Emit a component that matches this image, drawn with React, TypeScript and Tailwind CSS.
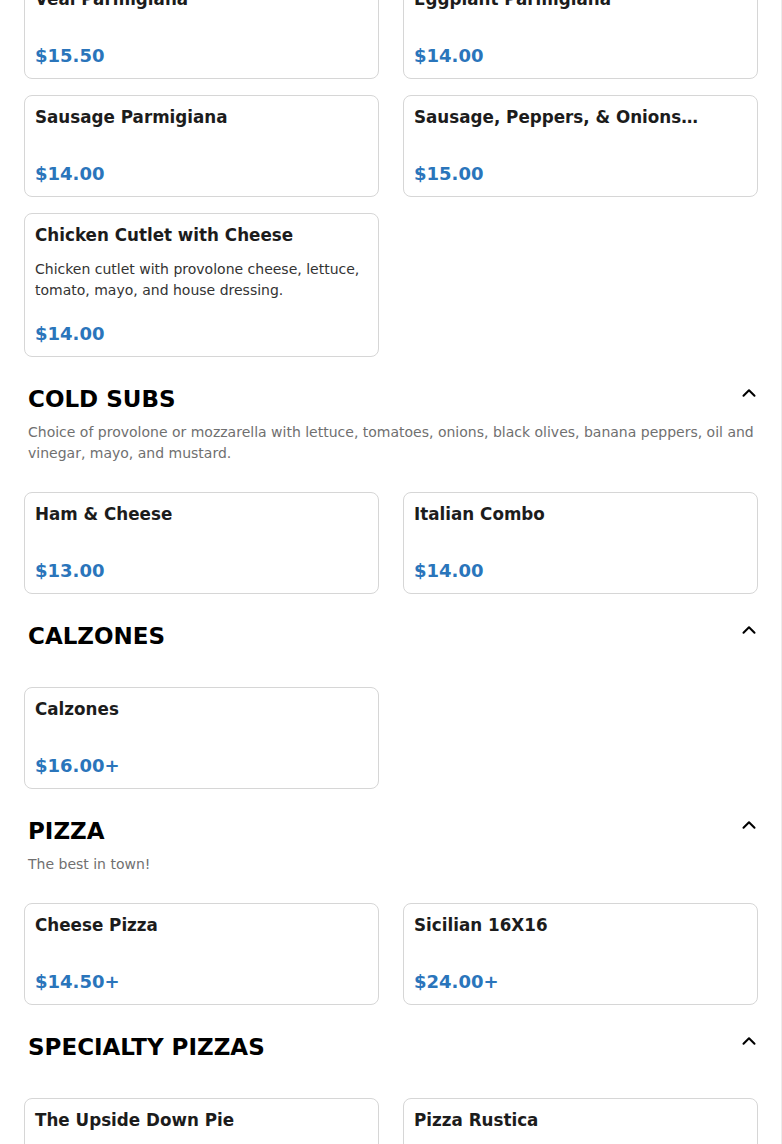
import { ChevronUp } from "lucide-react";

type Item = { name: string; price: string; description?: string };
type Section = { title?: string; subtitle?: string; items: Item[] };

const sections: Section[] = [
  {
    items: [
      { name: "Veal Parmigiana", price: "$15.50" },
      { name: "Eggplant Parmigiana", price: "$14.00" },
      { name: "Sausage Parmigiana", price: "$14.00" },
      { name: "Sausage, Peppers, & Onions…", price: "$15.00" },
      {
        name: "Chicken Cutlet with Cheese",
        price: "$14.00",
        description:
          "Chicken cutlet with provolone cheese, lettuce, tomato, mayo, and house dressing.",
      },
    ],
  },
  {
    title: "COLD SUBS",
    subtitle:
      "Choice of provolone or mozzarella with lettuce, tomatoes, onions, black olives, banana peppers, oil and vinegar, mayo, and mustard.",
    items: [
      { name: "Ham & Cheese", price: "$13.00" },
      { name: "Italian Combo", price: "$14.00" },
    ],
  },
  {
    title: "CALZONES",
    items: [{ name: "Calzones", price: "$16.00+" }],
  },
  {
    title: "PIZZA",
    subtitle: "The best in town!",
    items: [
      { name: "Cheese Pizza", price: "$14.50+" },
      { name: "Sicilian 16X16", price: "$24.00+" },
    ],
  },
  {
    title: "SPECIALTY PIZZAS",
    items: [
      { name: "The Upside Down Pie", price: "$18.00+" },
      { name: "Pizza Rustica", price: "$20.00+" },
    ],
  },
];

const ItemCard = ({ item }: { item: Item }) => (
  <div className="flex flex-col rounded-lg border border-[#d6d6d6] bg-white px-[10px] pt-[11px] pb-[11px]">
    <h3 className="text-[16.75px] font-bold leading-[20px] text-[#1c1c1c]">
      {item.name}
    </h3>
    <p className="mt-[14px] text-sm leading-[21px] text-[#333333]">
      {item.description}
    </p>
    <div className="mt-[21px] text-[18px] font-bold leading-[23px] text-[#2a75bb]">
      {item.price}
    </div>
  </div>
);

const MenuSection = ({ section }: { section: Section }) => (
  <section className="flex flex-col">
    {section.title && (
      <>
        <div className="flex items-start justify-between pl-1">
          <h2 className="text-[23px] font-bold leading-[32px] text-black">
            {section.title}
          </h2>
          <ChevronUp
            size={22}
            strokeWidth={2.25}
            className="-mt-[1px] -mr-[2px] text-black"
          />
        </div>
        <p className="mt-[7px] pl-1 text-sm leading-[21px] text-[#707070]">
          {section.subtitle}
        </p>
      </>
    )}
    <div className={section.title ? "mt-[28px]" : ""}>
      <div className="grid grid-cols-2 gap-x-6 gap-y-4">
        {section.items.map((item) => (
          <ItemCard key={item.name} item={item} />
        ))}
      </div>
    </div>
  </section>
);

export default function App() {
  return (
    <div
      className="h-[1144px] w-[782px] overflow-hidden border-r border-[#ececec] bg-white"
      style={{ fontFamily: '"DejaVu Sans", sans-serif' }}
    >
      <div className="-mt-[23px] flex flex-col gap-[26px] pl-6 pr-[23px]">
        {sections.map((s, i) => (
          <MenuSection key={i} section={s} />
        ))}
      </div>
    </div>
  );
}
